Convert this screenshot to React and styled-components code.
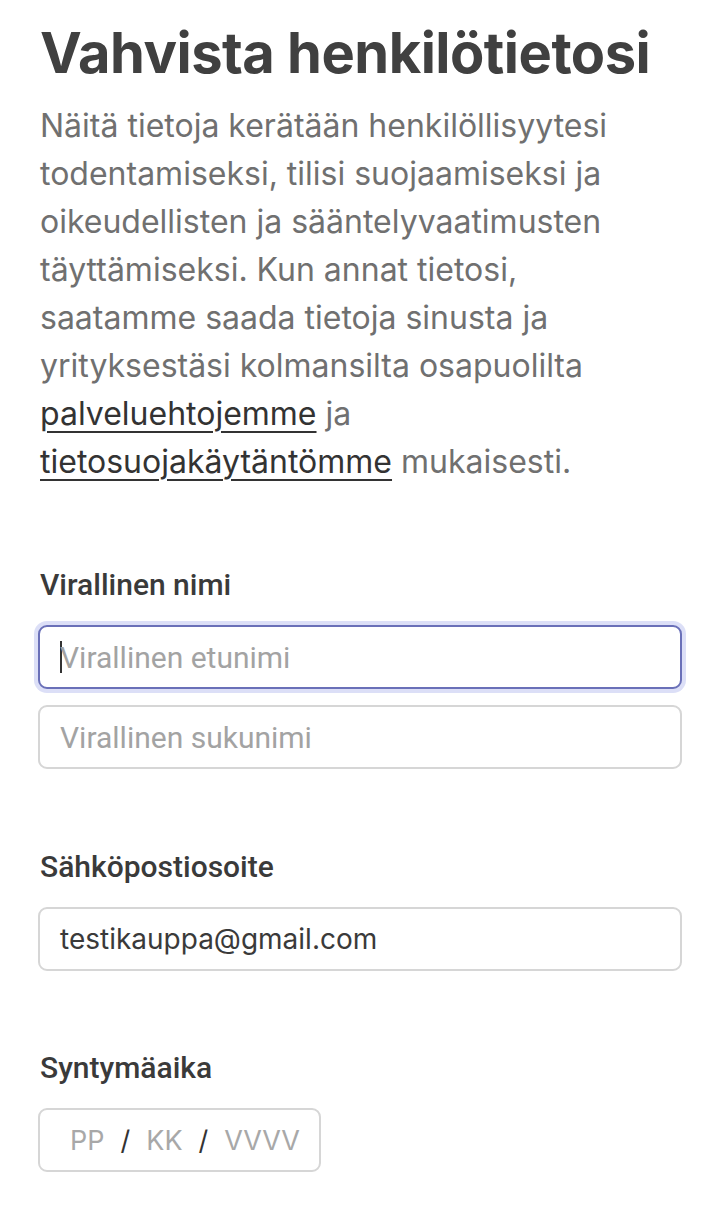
import React from "react";
import styled, { createGlobalStyle } from "styled-components";

const GlobalStyle = createGlobalStyle`
  html, body {
    margin: 0;
    padding: 0;
    background: #ffffff;
  }
  * {
    box-sizing: border-box;
  }
`;

const Page = styled.div`
  padding: 17px 40px 40px 40px;
  display: flex;
  flex-direction: column;
  font-family: Inter, Lato, sans-serif;
`;

const Title = styled.h1`
  margin: 0 0 13px 0;
  font-size: 56px;
  line-height: 72px;
  font-weight: 700;
  color: #404040;
  letter-spacing: -0.5px;
`;

const Intro = styled.p`
  margin: 0;
  font-size: 32px;
  line-height: 48px;
  color: #707070;
  font-weight: 400;
`;

const Link = styled.a`
  color: #333333;
  text-decoration: underline;
  text-underline-offset: 6px;
  text-decoration-thickness: 2px;
`;

const Section = styled.div`
  display: flex;
  flex-direction: column;
  gap: 16px;
  margin-top: ${(p) => p.$top}px;
`;

const Label = styled.label`
  font-family: Roboto, sans-serif;
  font-size: 30px;
  line-height: 40px;
  font-weight: 500;
  color: #3a3a3a;
  margin-bottom: 4px;
`;

const Input = styled.div`
  margin: 0 -2px;
  height: 64px;
  width: ${(p) => (p.$width ? `${p.$width}px` : "auto")};
  border: 2px solid ${(p) => (p.$focused ? "#6a70b8" : "#d6d6d6")};
  border-radius: 9px;
  box-shadow: ${(p) => (p.$focused ? "0 0 0 4px #dcdff7" : "none")};
  display: flex;
  align-items: center;
  padding-left: ${(p) => p.$pad || 20}px;
  background: #fff;
  font-family: Roboto, sans-serif;
  font-size: 30px;
  color: #a3a3a3;
`;

const Caret = styled.span`
  display: inline-block;
  width: 2px;
  height: 32px;
  background: #333;
  margin-right: -2px;
`;

const Value = styled.span`
  font-family: Inter, Lato, sans-serif;
  font-size: 28px;
  color: #3a3a3a;
`;

const DatePart = styled.span`
  color: #a8a8a8;
  font-family: Inter, Lato, sans-serif;
  font-size: 27px;
`;

const Slash = styled.span`
  color: #333;
  margin: 0 16px;
  font-family: Inter, Lato, sans-serif;
  font-size: 27px;
`;

export default function App() {
  return (
    <>
      <GlobalStyle />
      <Page>
        <Title>Vahvista henkilötietosi</Title>
        <Intro>
          Näitä tietoja kerätään henkilöllisyytesi <br />
          todentamiseksi, tilisi suojaamiseksi ja <br />
          oikeudellisten ja sääntelyvaatimusten <br />
          täyttämiseksi. Kun annat tietosi, <br />
          saatamme saada tietoja sinusta ja <br />
          yrityksestäsi kolmansilta osapuolilta <br />
          <Link href="#">palveluehtojemme</Link> ja <br />
          <Link href="#">tietosuojakäytäntömme</Link> mukaisesti.
        </Intro>

        <Section $top={79}>
          <Label>Virallinen nimi</Label>
          <Input $focused>
            <Caret />
            Virallinen etunimi
          </Input>
          <Input>Virallinen sukunimi</Input>
        </Section>

        <Section $top={78}>
          <Label>Sähköpostiosoite</Label>
          <Input>
            <Value>testikauppa@gmail.com</Value>
          </Input>
        </Section>

        <Section $top={77}>
          <Label>Syntymäaika</Label>
          <Input $width={283} $pad={30}>
            <DatePart>PP</DatePart>
            <Slash>/</Slash>
            <DatePart>KK</DatePart>
            <Slash>/</Slash>
            <DatePart>VVVV</DatePart>
          </Input>
        </Section>
      </Page>
    </>
  );
}
